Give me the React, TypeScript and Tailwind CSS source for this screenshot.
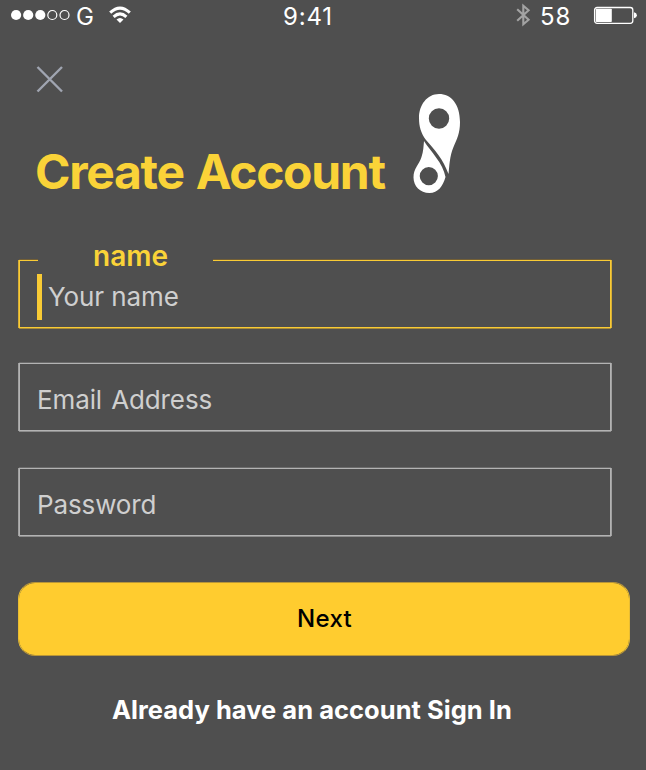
import React from "react";

function StatusBar() {
  return (
    <div className="relative flex h-8 items-start justify-between">
      <div className="flex items-start">
        <svg className="ml-[10px] mt-[9px]" width="61" height="12" viewBox="0 0 61 12" fill="white">
          <circle cx="6.1" cy="6" r="5.1" />
          <circle cx="18.2" cy="6" r="5.1" />
          <circle cx="30.3" cy="6" r="5.1" />
          <circle cx="42.3" cy="6" r="4.5" fill="none" stroke="white" strokeWidth="1.2" />
          <circle cx="54.5" cy="6" r="4.5" fill="none" stroke="white" strokeWidth="1.2" />
        </svg>
        <span className="ml-[5px] mt-[2px] w-[20px] text-[24px] leading-[29px]">G</span>
        <svg className="ml-[12px] mt-[6px]" width="24" height="18" viewBox="0 0 24 18">
          <g fill="none" stroke="white" strokeWidth="3">
            <path d="M2.2 6.7 Q12 -2.6 21.8 6.7" />
            <path d="M5.6 10.8 Q12 4.8 18.4 10.8" />
          </g>
          <path d="M8.5 13.5 Q12 10.4 15.5 13.5 L12 16.9 Z" fill="white" />
        </svg>
      </div>
      <span className="absolute left-[283px] top-[2px] text-[24px] leading-[29px] tracking-[0.8px]">9:41</span>
      <div className="flex items-start">
        <svg className="mt-[3px]" width="15" height="24" viewBox="0 0 15 24" fill="none" stroke="#a3a3a3" strokeWidth="2.1">
          <path d="M1.2 6.2 L12.6 16.8 L7.3 21.3 V2.7 L12.6 7.2 L1.2 17.8" />
        </svg>
        <span className="ml-[9px] mt-[2px] w-[31px] text-[24px] leading-[29px] tracking-[0.8px]">58</span>
        <svg className="ml-[22px] mr-[9px] mt-[6px]" width="44" height="19" viewBox="0 0 44 19">
          <rect x="1.6" y="1.5" width="38.2" height="15.8" rx="2.5" fill="none" stroke="white" strokeWidth="1.3" />
          <rect x="2.8" y="2.8" width="16" height="13.2" rx="0.8" fill="white" />
          <path d="M41 6.3 Q43.9 7 43.9 9.3 Q43.9 11.6 41 12.3 Z" fill="white" />
        </svg>
      </div>
    </div>
  );
}

function Logo() {
  return (
    <svg width="50" height="102" viewBox="0 0 50 102" fill="white">
      <path
        fillRule="evenodd"
        d="M26 1 C38 1 47 11 47 29 C47 40 44 46 40.5 54 C36.5 63 36.5 73 35.5 81 C30 66 22 57 13 47 C8 40 6 34 6 25 C6 12 14 1 26 1 Z M26 15.3 A10.2 10.2 0 1 0 26 35.7 A10.2 10.2 0 1 0 26 15.3 Z"
      />
      <path
        fillRule="evenodd"
        d="M11 48 C18 59 30 70 32.5 84 C30 93 25 100 16.5 100 C7 100 0.5 93 0.5 84.5 C0.5 75 6 72 8.5 64 C10.5 58 10.5 53 11 48 Z M15.8 74 A9.1 9.1 0 1 0 15.8 92.2 A9.1 9.1 0 1 0 15.8 74 Z"
      />
    </svg>
  );
}

function Field({ label }: { label: string }) {
  return (
    <div className="ml-[19px] flex h-[68px] w-[592px] items-center border border-[#b3b3b3] pl-[17px] pt-[5px] text-[26px] leading-[31px] tracking-[-0.12px] [word-spacing:2px] text-[#cfcfcf] shadow-[0_-1px_0_#6b6b6b,0_1px_0_#8c8c8c,-1px_0_0_#a0a0a0,1px_0_0_#a0a0a0]">
      {label}
    </div>
  );
}

export default function App() {
  return (
    <main className="flex h-[770px] w-[646px] flex-col overflow-hidden bg-[#4f4f4f] font-['Inter',sans-serif] text-white">
      <StatusBar />
      <svg className="ml-[36px] mt-[33px] shrink-0" width="28" height="28" viewBox="0 0 28 28" stroke="#a0a5b1" strokeWidth="2.4">
        <path d="M1.5 2 L26 26.5 M26 2 L1.5 26.5" />
      </svg>
      <header className="flex h-[102px] items-start">
        <h1 className="ml-[35px] mt-[50px] w-[378px] whitespace-nowrap text-[48px] font-bold leading-[58px] tracking-[-1.3px] [word-spacing:2px] text-[#fad338]">
          Create Account
        </h1>
        <Logo />
      </header>

      <div className="relative ml-[19px] mt-[65px] flex h-[68px] w-[592px] shrink-0 items-start border border-[#f9cb35] shadow-[0_-1px_0_#735f35,0_1px_0_#a98c38,-1px_0_0_#d6ae37,1px_0_0_#d6ae37]">
        <span className="absolute -top-[21px] left-[18px] h-[30px] w-[175px] bg-[#4f4f4f] pl-[55px] text-[28px] font-semibold leading-[32px] text-[#fad338]">
          name
        </span>
        <span className="relative ml-[17px] mt-[13px] h-[46px] w-[5px] bg-[#f9cb35]" />
        <span className="ml-[6px] mt-[20px] text-[26px] leading-[31px] tracking-[-0.1px] text-[#cfcfcf]">Your name</span>
      </div>
      <div className="mt-[35px] flex flex-col gap-[37px]">
        <Field label="Email Address" />
        <Field label="Password" />
      </div>

      <button className="ml-[18px] mt-[46px] h-[74px] w-[612px] shrink-0 rounded-[17px] border border-x-[#e9bd33] border-y-[#b99638] bg-[#ffcc2f] bg-clip-padding pb-[2px] pl-[1px] text-[24px] font-medium leading-[29px] tracking-[0.3px] text-black">
        Next
      </button>
      <p className="ml-[112px] mt-[38px] whitespace-nowrap text-[25.5px] font-bold leading-[31px] tracking-[0.03px]">
        Already have an account Sign In
      </p>
    </main>
  );
}
